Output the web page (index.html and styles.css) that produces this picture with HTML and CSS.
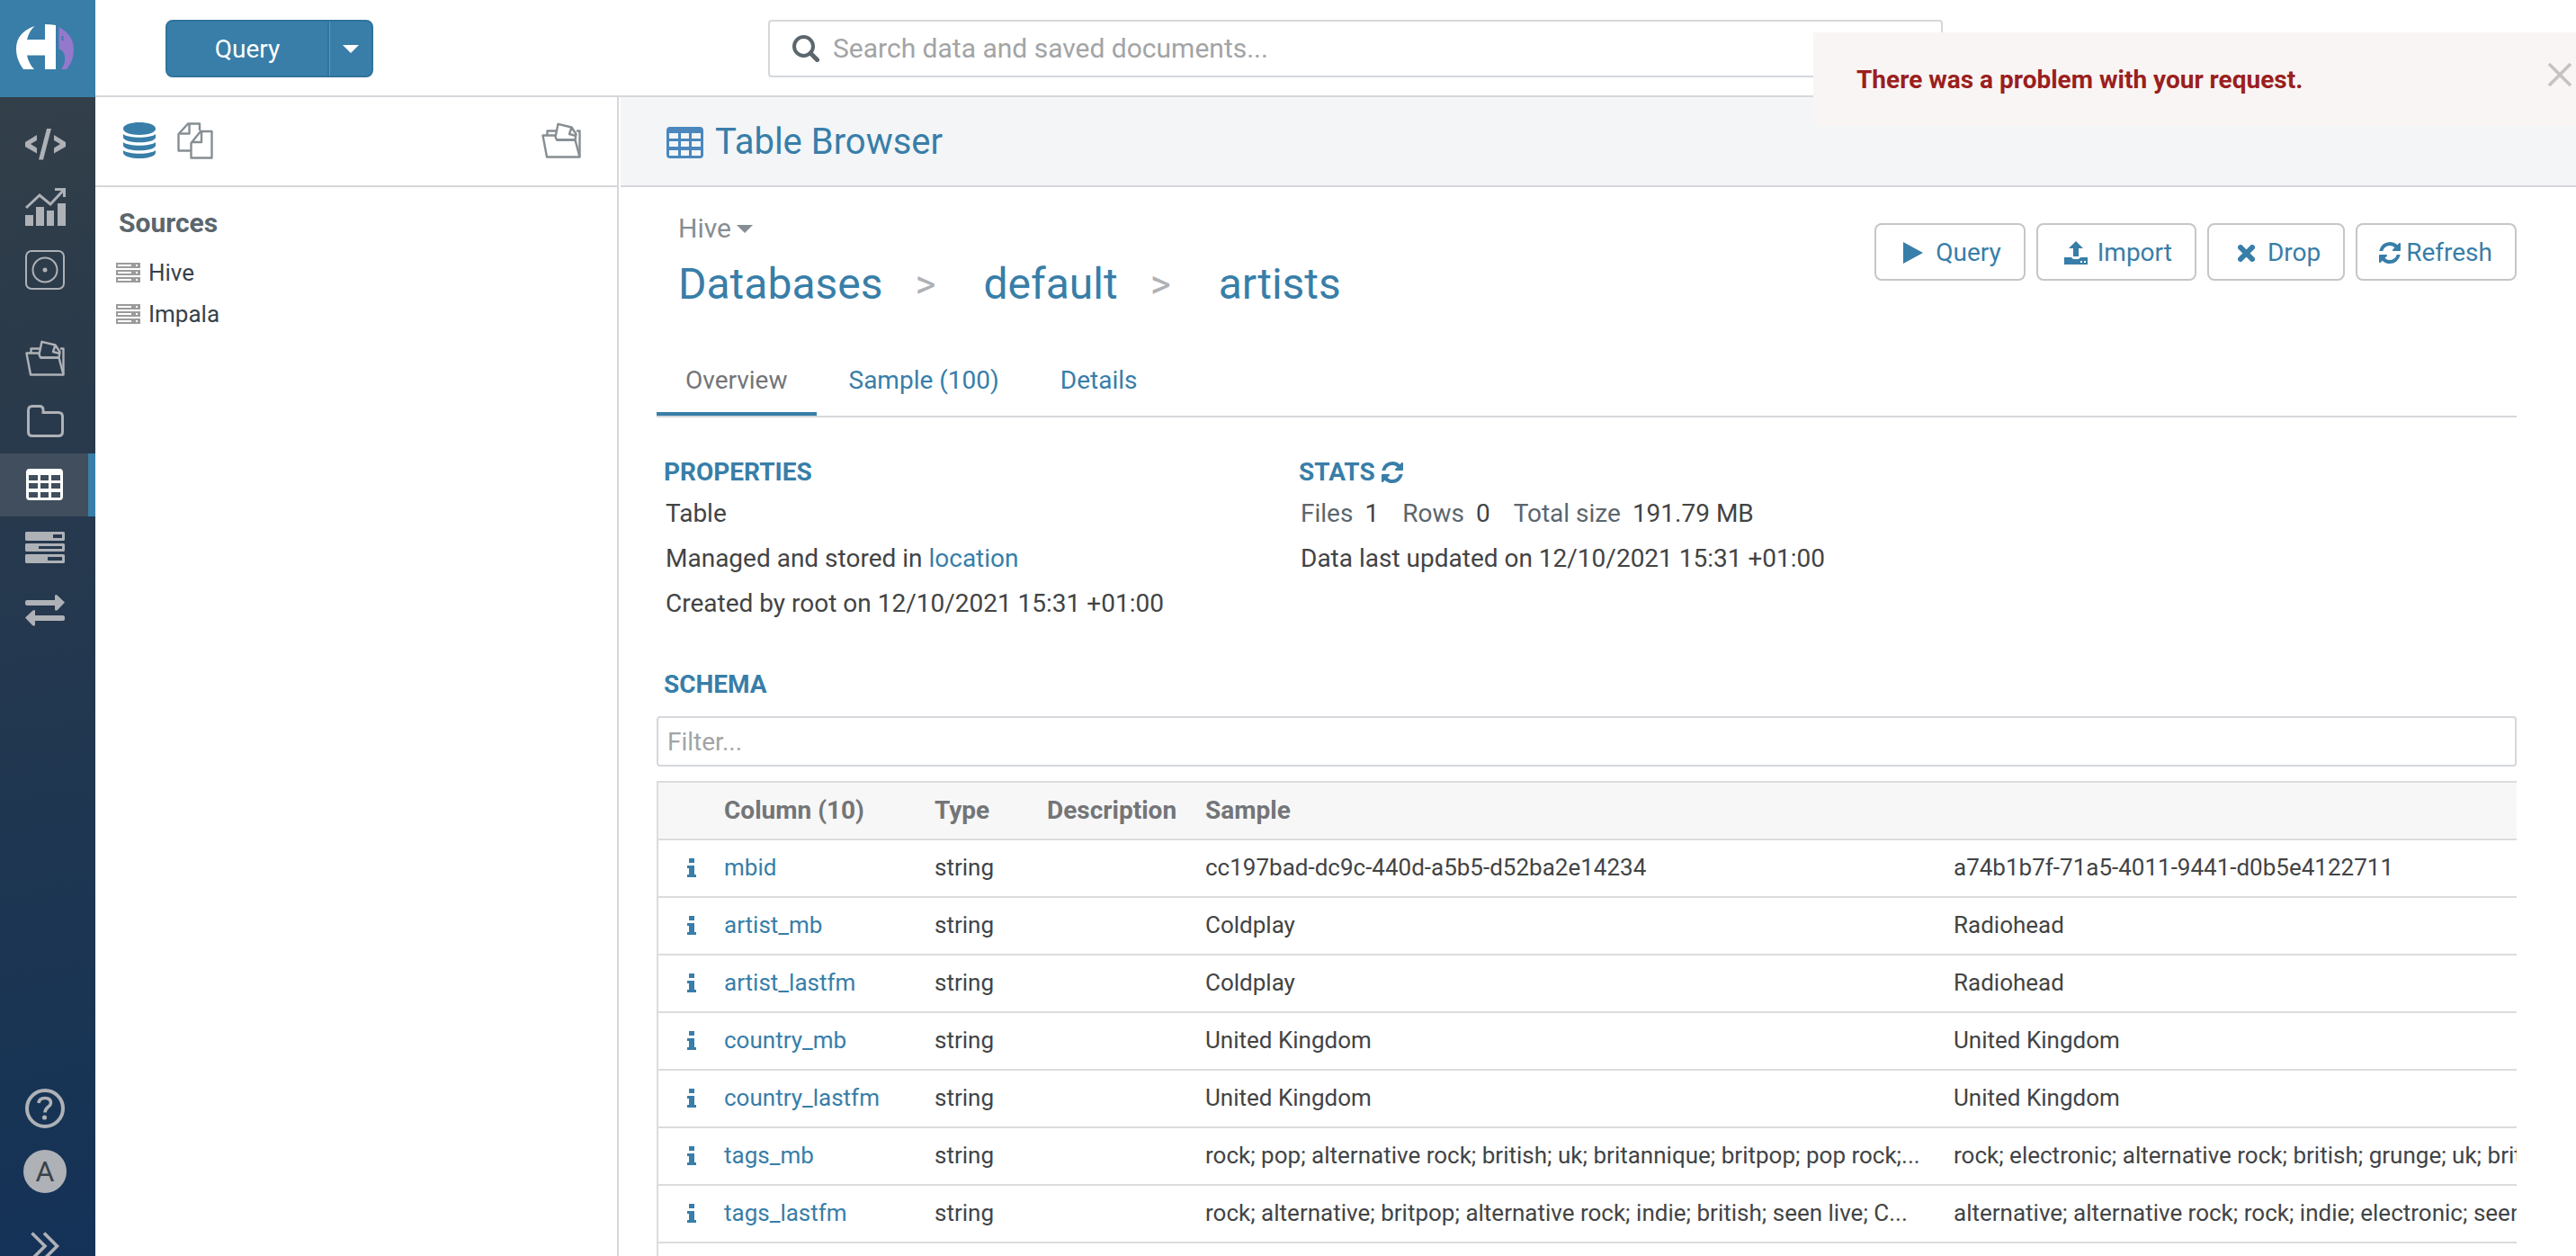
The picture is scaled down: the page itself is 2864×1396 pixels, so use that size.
FILE: index.html
```html
<!DOCTYPE html>
<html lang="en">
<head>
<meta charset="utf-8">
<title>Table Browser</title>
<link rel="stylesheet" href="styles.css">
</head>
<body>
<svg class="sprite" aria-hidden="true">
  <symbol id="docs" viewBox="0 0 44 40"><g fill="none" stroke="currentColor" stroke-width="2.4" stroke-linejoin="round"><path d="M16 14.500H1.500L6 38.500H42.500L37.500 19.500H17"/><path d="M6.500 14V9.500H16M39 9.500H42.500V38"/><path d="M18.500 1.800L33.500 5.500L38.500 13L37.500 19.500H17L15.500 16ZM33.500 5.500L31 13L38.500 15"/></g></symbol>
  <symbol id="grid" viewBox="0 0 41 35"><path fill="currentColor" fill-rule="evenodd" d="M4 0H37Q41 0 41 4V31Q41 35 37 35H4Q0 35 0 31V4Q0 0 4 0ZM3 7V13H13V7ZM16 7V13H25V7ZM28 7V13H38V7ZM3 16V22H13V16ZM16 16V22H25V16ZM28 16V22H38V16ZM3 26V32H13V26ZM16 26V32H25V26ZM28 26V32H38V26Z"/></symbol>
  <symbol id="sync" viewBox="0 0 1536 1536"><path fill="currentColor" d="M1511 928q0 5-1 7-64 268-268 434.500T764 1536q-146 0-282.500-55T238 1324l-129 129q-19 19-45 19t-45-19-19-45V960q0-26 19-45t45-19h448q26 0 45 19t19 45-19 45l-137 137q71 66 161 102t187 36q134 0 250-65t186-179q11-17 53-117 8-23 30-23h192q13 0 22.500 9.500t9.500 22.500zm25-800v448q0 26-19 45t-45 19h-448q-26 0-45-19t-19-45 19-45l138-138Q969 256 768 256q-134 0-250 65T332 500q-11 17-53 117-8 23-30 23H50q-13 0-22.500-9.500T18 608v-7q65-268 270-434.500T768 0q146 0 284 55.500T1297 212l130-129q19-19 45-19t45 19 19 45z"/></symbol>
  <symbol id="source" viewBox="0 0 27 22"><path fill="currentColor" fill-rule="evenodd" d="M0 0H27V6H0ZM2 2V4H17V2ZM22 2V4H24V2ZM0 8H27V14H0ZM2 10V12H17V10ZM22 10V12H24V10ZM0 16H27V22H0ZM2 18V20H17V18ZM22 18V20H24V18Z"/></symbol>
  <symbol id="info" viewBox="0 0 10 21"><path fill="currentColor" d="M2 0H8V5H2ZM0 8H8V18H10V21H0V18H2V11H0Z"/></symbol>
</svg>

<nav class="rail" aria-label="Applications">
  <a class="logo" href="#" aria-label="Hue home"><svg width="64" height="50" viewBox="0 0 64 50"><path fill="#fff" d="M20.500 2C8 6 0 15 0 27C0 36 3 43 8 50H20C16 46 13 40 12 34.500H32V50H44V1Q38 0 32 0V17H12C13.500 11 16 6 20.500 2Z"/><path fill="#9478cc" d="M47.500 3C59 9 64 18 64 28C64 37 61 44 56 50H50C56 43 56 30 47.500 27.500Z"/><path d="M53 13.500a2 2 0 1 0 0 4" fill="none" stroke="#387ea8" stroke-width="1.500"/></svg></a>
  <div class="apps">
    <a class="app" href="#" aria-label="Editor"><svg width="45" height="35" viewBox="0 0 45 35"><path fill="currentColor" d="M13 7V13L6 17L13 21.500V27.500L0 20V15ZM32 7V13L39 17L32 21.500V27.500L45 20V15ZM24 0H29L20 34.500H15Z"/></svg></a>
    <a class="app" href="#" aria-label="Dashboard"><svg width="45" height="42" viewBox="0 0 45 42"><path fill="currentColor" d="M0 30H9V42H0ZM12 21H21V42H12ZM24 25H32V42H24ZM36 17H45V42H36Z"/><path d="M1 22L16 8L28 18L43 2M33 1.500H43.500V10" fill="none" stroke="currentColor" stroke-width="3"/></svg></a>
    <a class="app" href="#" aria-label="Scheduler"><svg width="44" height="44" viewBox="0 0 44 44"><rect x="1" y="1" width="42" height="42" rx="6" fill="none" stroke="currentColor" stroke-width="2"/><circle cx="22" cy="22" r="13.500" fill="none" stroke="currentColor" stroke-width="2"/><circle cx="22" cy="22" r="2.500" fill="currentColor"/></svg></a>
  </div>
  <div class="apps browsers">
    <a class="app" href="#" aria-label="Documents"><svg width="44" height="40"><use href="#docs"/></svg></a>
    <a class="app" href="#" aria-label="Files"><svg width="41" height="36" viewBox="0 0 41 36"><path d="M6 1.500H14Q18 1.500 18 5.500V8.500H35Q39.500 8.500 39.500 13V30Q39.500 34.500 35 34.500H6Q1.500 34.500 1.500 30V6Q1.500 1.500 6 1.500Z" fill="none" stroke="currentColor" stroke-width="3"/></svg></a>
    <a class="app active" href="#" aria-label="Tables"><svg width="41" height="35"><use href="#grid"/></svg></a>
    <a class="app" href="#" aria-label="Jobs"><svg width="44" height="35" viewBox="0 0 44 35"><path fill="currentColor" fill-rule="evenodd" d="M1 0H43L44 1V9L43 10H1L0 9V1ZM31 3V7H41V3ZM1 13H43L44 14V21L43 22H1L0 21V14ZM15 16V19H41V16ZM1 25H43L44 26V34L43 35H1L0 34V26ZM25 28V32H41V28Z"/></svg></a>
    <a class="app" href="#" aria-label="Importer"><svg width="44" height="35" viewBox="0 0 44 35"><path fill="currentColor" d="M2 6H33V1Q34-1 36 1L44 8.500L36 17Q33 19 33 16V12H2Q0 12 0 10V8Q0 6 2 6ZM42 23H11V18Q11 16 8 18L0 25.500L8 34Q11 36 11 33V29H42Q44 29 44 27V25Q44 23 42 23Z"/></svg></a>
  </div>
  <div class="apps account">
    <a class="app" href="#" aria-label="Help"><svg width="44" height="44" viewBox="0 0 44 44" fill="none" stroke="currentColor"><circle cx="22" cy="22" r="20" stroke-width="4"/><path d="M15 16Q15.500 10.500 22 10.500Q28.500 10.500 28.500 16C28.500 20 22 20.500 22 26.500" stroke-width="3.600"/><circle cx="21.500" cy="32" r="2.600" fill="currentColor" stroke="none"/></svg></a>
    <a class="app" href="#" aria-label="User menu"><span class="avatar">A</span></a>
    <button class="app" type="button" aria-label="Expand"><svg width="32" height="32" viewBox="0 0 32 32"><path d="M1.500 1.500L16 16L1.500 30.500M15 1.500L29.500 16L15 30.500" fill="none" stroke="currentColor" stroke-width="3.600"/></svg></button>
  </div>
</nav>

<div class="shell">
  <header class="topbar">
    <div class="split">
      <button class="split-main" type="button">Query</button>
      <button class="split-caret" type="button" aria-label="More query types"><span class="caret"></span></button>
    </div>
    <label class="search">
      <svg width="30" height="30" viewBox="0 0 30 30" fill="none" stroke="currentColor"><circle cx="12.500" cy="12.500" r="10.500" stroke-width="4"/><path d="M20 20L27.500 27.500" stroke-width="5" stroke-linecap="round"/></svg>
      <input type="text" placeholder="Search data and saved documents..." aria-label="Search data and saved documents">
    </label>
  </header>

  <div class="body">
    <aside class="assist">
      <div class="assist-tools">
        <button class="tool on" type="button" aria-label="Sources"><svg width="36" height="40" viewBox="0 0 36 40"><path fill="currentColor" d="M0 7C0-2.300 36-2.300 36 7C36 16.300 0 16.300 0 7ZM0 13C6 18 30 18 36 13V17C34 24 2 24 0 17ZM0 22C6 27 30 27 36 22V26C34 33 2 33 0 26ZM0 31C6 36 30 36 36 31V34C34 42 2 42 0 34Z"/></svg></button>
        <button class="tool" type="button" aria-label="Documents"><svg width="40" height="41" viewBox="0 0 40 41"><g fill="none" stroke="currentColor" stroke-width="2.400" stroke-linejoin="round"><path d="M15 31.500H1.500V13L12 1.500H25V9"/><path d="M13.500 2V12.500H3"/><path d="M15.500 39.500H38.500V10H26L15.500 23ZM27 11V22H16.500"/></g></svg></button>
        <button class="tool end" type="button" aria-label="Open documents"><svg width="44" height="40"><use href="#docs"/></svg></button>
      </div>
      <h2 class="assist-title">Sources</h2>
      <ul class="sources">
        <li><a href="#"><svg width="27" height="22"><use href="#source"/></svg>Hive</a></li>
        <li><a href="#"><svg width="27" height="22"><use href="#source"/></svg>Impala</a></li>
      </ul>
    </aside>

    <main class="main">
      <div class="titlebar">
        <svg width="41" height="35"><use href="#grid"/></svg>
        <h1>Table Browser</h1>
      </div>
      <div class="content">
        <div class="heading">
          <div>
            <button class="engine" type="button">Hive<span class="caret"></span></button>
            <nav class="crumbs" aria-label="Breadcrumb">
              <a href="#">Databases</a><span>&gt;</span><a href="#">default</a><span>&gt;</span><a href="#">artists</a>
            </nav>
          </div>
          <div class="actions">
            <button class="btn" type="button"><svg class="i-play" width="22" height="24" viewBox="0 0 22 24"><path fill="currentColor" d="M0 0L22 12L0 24Z"/></svg>Query</button>
            <button class="btn" type="button"><svg class="i-up" width="26" height="26" viewBox="0 0 26 26"><path fill="currentColor" fill-rule="evenodd" d="M13 0L21 8H16V17H10V8H5ZM0 18H8Q9 20 11 20H15Q17 20 18 18H26V26H0ZM18 22V24H20V22ZM22 22V24H24V22Z"/></svg>Import</button>
            <button class="btn" type="button"><svg class="i-x" width="19" height="19" viewBox="0 0 19 19"><path d="M3 3L16 16M16 3L3 16" stroke="currentColor" stroke-width="6" stroke-linecap="round"/></svg>Drop</button>
            <button class="btn" type="button"><svg class="i-sync" width="24" height="24"><use href="#sync"/></svg>Refresh</button>
          </div>
        </div>

        <div class="tabs" role="tablist">
          <button class="tab selected" type="button" role="tab" aria-selected="true">Overview</button>
          <button class="tab" type="button" role="tab" aria-selected="false">Sample (100)</button>
          <button class="tab" type="button" role="tab" aria-selected="false">Details</button>
        </div>

        <div class="facts">
          <section>
            <h3>PROPERTIES</h3>
            <p>Table</p>
            <p>Managed and stored in <a href="#">location</a></p>
            <p>Created by root on 12/10/2021 15:31 +01:00</p>
          </section>
          <section>
            <h3>STATS <svg width="24" height="24"><use href="#sync"/></svg></h3>
            <p class="stats"><span><i>Files</i>1</span><span><i>Rows</i>0</span><span><i>Total size</i>191.79 MB</span></p>
            <p>Data last updated on 12/10/2021 15:31 +01:00</p>
          </section>
        </div>

        <h3 class="schema-title">SCHEMA</h3>
        <input class="filter" type="text" placeholder="Filter..." aria-label="Filter columns">

        <div class="table-wrap">
          <table class="schema">
            <colgroup><col class="c-info"><col class="c-name"><col class="c-type"><col class="c-desc"><col class="c-sample"><col class="c-sample"></colgroup>
            <thead><tr><th></th><th>Column (10)</th><th>Type</th><th>Description</th><th colspan="2">Sample</th></tr></thead>
            <tbody>
              <tr><td><svg width="10" height="21"><use href="#info"/></svg></td><td><a href="#">mbid</a></td><td>string</td><td></td><td>cc197bad-dc9c-440d-a5b5-d52ba2e14234</td><td>a74b1b7f-71a5-4011-9441-d0b5e4122711</td></tr>
              <tr><td><svg width="10" height="21"><use href="#info"/></svg></td><td><a href="#">artist_mb</a></td><td>string</td><td></td><td>Coldplay</td><td>Radiohead</td></tr>
              <tr><td><svg width="10" height="21"><use href="#info"/></svg></td><td><a href="#">artist_lastfm</a></td><td>string</td><td></td><td>Coldplay</td><td>Radiohead</td></tr>
              <tr><td><svg width="10" height="21"><use href="#info"/></svg></td><td><a href="#">country_mb</a></td><td>string</td><td></td><td>United Kingdom</td><td>United Kingdom</td></tr>
              <tr><td><svg width="10" height="21"><use href="#info"/></svg></td><td><a href="#">country_lastfm</a></td><td>string</td><td></td><td>United Kingdom</td><td>United Kingdom</td></tr>
              <tr><td><svg width="10" height="21"><use href="#info"/></svg></td><td><a href="#">tags_mb</a></td><td>string</td><td></td><td>rock; pop; alternative rock; british; uk; britannique; britpop; pop rock;...</td><td>rock; electronic; alternative rock; british; grunge; uk; britpop</td></tr>
              <tr><td><svg width="10" height="21"><use href="#info"/></svg></td><td><a href="#">tags_lastfm</a></td><td>string</td><td></td><td>rock; alternative; britpop; alternative rock; indie; british; seen live; C...</td><td>alternative; alternative rock; rock; indie; electronic; seen live</td></tr>
            </tbody>
          </table>
        </div>
      </div>
    </main>
  </div>
</div>

<div class="toast" role="alert">
  <strong>There was a problem with your request.</strong>
  <button type="button" aria-label="Close"><svg width="28" height="28" viewBox="0 0 28 28"><path d="M2 2L26 26M26 2L2 26" stroke="currentColor" stroke-width="3.600"/></svg></button>
</div>
</body>
</html>
```
FILE: styles.css
```css
:root {
  --blue: #387ea8;
  --line: #d5d7db;
  --text: #424445;
}

* { box-sizing: border-box; }

body {
  margin: 0;
  display: flex;
  height: 100vh;
  overflow: hidden;
  background: #fff;
  color: var(--text);
  font: 28px/40px Roboto, "Liberation Sans", sans-serif;
}

h1, h2, h3, p, ul { margin: 0; padding: 0; }
ul { list-style: none; }
a { color: var(--blue); text-decoration: none; }
button, input { font: inherit; margin: 0; }
button { border: 0; padding: 0; background: none; color: inherit; cursor: pointer; }
svg { display: block; flex: none; }
.sprite { position: absolute; width: 0; height: 0; }

.caret {
  border: 9px solid transparent;
  border-top: 9px solid currentColor;
  border-bottom: 0;
}

/* Application rail */
.rail {
  flex: none;
  width: 106px;
  display: flex;
  flex-direction: column;
  background: linear-gradient(170deg, #36424a 0, #2c3b4a 24%, #24384f 50%, #183454 85%, #143258);
}
.logo {
  flex: none;
  height: 108px;
  display: flex;
  align-items: center;
  padding: 0 0 4px 18px;
  background: var(--blue);
}
.apps { flex: none; padding-top: 17px; }
.browsers { padding-top: 29px; }
.account { margin-top: auto; margin-bottom: -37px; padding: 0; }
.app {
  display: flex;
  align-items: center;
  justify-content: center;
  width: 100%;
  height: 70px;
  padding-right: 6px;
  color: #aeb1b6;
}
.browsers .app { padding-bottom: 2px; }
.app.active {
  padding-right: 0;
  border-right: 8px solid var(--blue);
  background: #404e5d;
  color: #fff;
}
button.app { height: 96px; }
.avatar {
  width: 48px;
  height: 48px;
  border-radius: 50%;
  background: #aeb1b6;
  color: #3a434a;
  font-size: 32px;
  line-height: 48px;
  text-align: center;
}

/* Top bar */
.shell { flex: 1; min-width: 0; display: flex; flex-direction: column; }
.topbar {
  flex: none;
  height: 108px;
  display: grid;
  grid-template-columns: 670px 1fr;
  align-items: center;
  padding: 2px 704px 0 78px;
  border-bottom: 2px solid var(--line);
}
.split {
  justify-self: start;
  display: flex;
  height: 64px;
  border: 2px solid #30739b;
  border-radius: 8px;
  background: var(--blue);
  color: #fff;
}
.split-main { width: 180px; padding-top: 2px; border-right: 2px solid #30739b; }
.split-caret {
  width: 47px;
  display: flex;
  align-items: center;
  justify-content: center;
  border-left: 1px solid #5b9abd;
}
.search {
  height: 64px;
  display: flex;
  align-items: center;
  gap: 15px;
  padding-left: 25px;
  border: 2px solid var(--line);
  border-radius: 4px;
  color: #5b666d;
}
.search input {
  flex: 1;
  min-width: 0;
  padding: 0;
  border: 0;
  outline: 0;
  background: none;
  font-size: 30px;
}
input::placeholder { color: #a2a4a6; opacity: 1; }

/* Left assist */
.body { flex: 1; min-height: 0; display: flex; }
.assist { flex: none; width: 582px; border-right: 2px solid var(--line); }
.assist-tools {
  height: 100px;
  display: flex;
  align-items: center;
  gap: 24px;
  padding: 0 40px 2px 31px;
  border-bottom: 2px solid var(--line);
}
.tool { color: #868e93; }
.tool.on { color: var(--blue); }
.tool.end { margin-left: auto; }
.assist-title {
  padding: 20px 26px;
  color: #5b666d;
  font-size: 30px;
  line-height: 40px;
}
.sources { padding-left: 23px; margin-top: -8px; }
.sources a {
  display: flex;
  align-items: center;
  gap: 9px;
  height: 46px;
  color: #36424a;
  font-size: 26px;
}
.sources svg { color: #9b9b9b; }

/* Main area */
.main { flex: 1; min-width: 0; display: flex; flex-direction: column; padding-left: 2px; }
.titlebar {
  flex: none;
  height: 100px;
  display: flex;
  align-items: center;
  gap: 13px;
  padding: 2px 0 0 51px;
  border-bottom: 2px solid var(--line);
  background: #f3f5f7;
  color: #4b87bd;
}
.titlebar h1 { color: var(--blue); font-size: 40px; font-weight: 400; line-height: 48px; }
.content {
  flex: 1;
  min-height: 0;
  display: flex;
  flex-direction: column;
  padding: 0 66px 0 40px;
}
.heading { display: flex; justify-content: space-between; height: 174px; }
.heading > div:first-child { padding: 26px 0 0 24px; }
.engine {
  display: flex;
  align-items: center;
  gap: 6px;
  color: #868e93;
  font-size: 30px;
  line-height: 40px;
}
.crumbs { display: flex; margin-top: 8px; font-size: 48px; line-height: 68px; }
.crumbs span { padding: 0 53px 0 36px; color: #aeb1b6; font-size: 44px; }
.actions { display: flex; gap: 12px; padding-top: 40px; }
.btn {
  display: flex;
  align-items: center;
  height: 64px;
  padding: 2px 25px 0 24px;
  border: 2px solid #c6c6c6;
  border-radius: 8px;
  color: var(--blue);
}
.i-play { margin: 0 14px 0 6px; }
.i-up { margin: 0 11px 0 5px; }
.i-x { margin: 0 14px 0 8px; }
.i-sync { margin-right: 6px; }

.tabs { flex: none; display: flex; gap: 4px; height: 82px; border-bottom: 2px solid var(--line); }
.tab { padding: 6px 32px 0; border-bottom: 4px solid transparent; color: var(--blue); }
.tab.selected { border-color: var(--blue); color: #737578; }

.facts { display: grid; grid-template-columns: 706px 1fr; padding: 41px 0 0 8px; }
h3 {
  display: flex;
  align-items: center;
  gap: 7px;
  color: var(--blue);
  font-size: 28px;
  line-height: 40px;
}
.facts p { padding-left: 2px; line-height: 50px; }
.facts h3 + p { margin-top: 1px; }
.stats { display: flex; gap: 26px; }
.stats i { margin-right: 13px; color: #5b666d; font-style: normal; }
.schema-title { margin: 45px 0 15px 8px; }

.filter {
  flex: none;
  width: 100%;
  height: 56px;
  padding: 0 10px;
  border: 2px solid var(--line);
  border-radius: 4px;
  color: var(--text);
}
.table-wrap {
  flex: 1;
  min-height: 0;
  margin-top: 16px;
  overflow: hidden;
  border-top: 2px solid #dcdcdc;
  border-left: 2px solid #dcdcdc;
}
.schema {
  width: 2256px;
  table-layout: fixed;
  border-collapse: separate;
  border-spacing: 0;
  font-size: 26px;
  line-height: 36px;
}
.c-info { width: 57px; }
.c-name { width: 234px; }
.c-type { width: 125px; }
.c-desc { width: 176px; }
.c-sample { width: 832px; }
.schema th, .schema td {
  height: 64px;
  padding: 0 16px;
  border-bottom: 2px solid #dcdcdc;
  text-align: left;
  white-space: nowrap;
}
.schema th { background: #f7f7f7; color: #737578; font-size: 28px; }
.schema td { padding-bottom: 2px; }
.schema td svg { margin-left: 16px; color: var(--blue); }

/* Error toast */
.toast {
  position: absolute;
  top: 36px;
  right: 0;
  width: 848px;
  height: 104px;
  display: flex;
  align-items: center;
  justify-content: space-between;
  padding: 2px 4px 0 48px;
  background: #f9f5f4;
  color: #9a1f20;
}
.toast button { margin-bottom: 12px; color: #c4c2c2; }
```
